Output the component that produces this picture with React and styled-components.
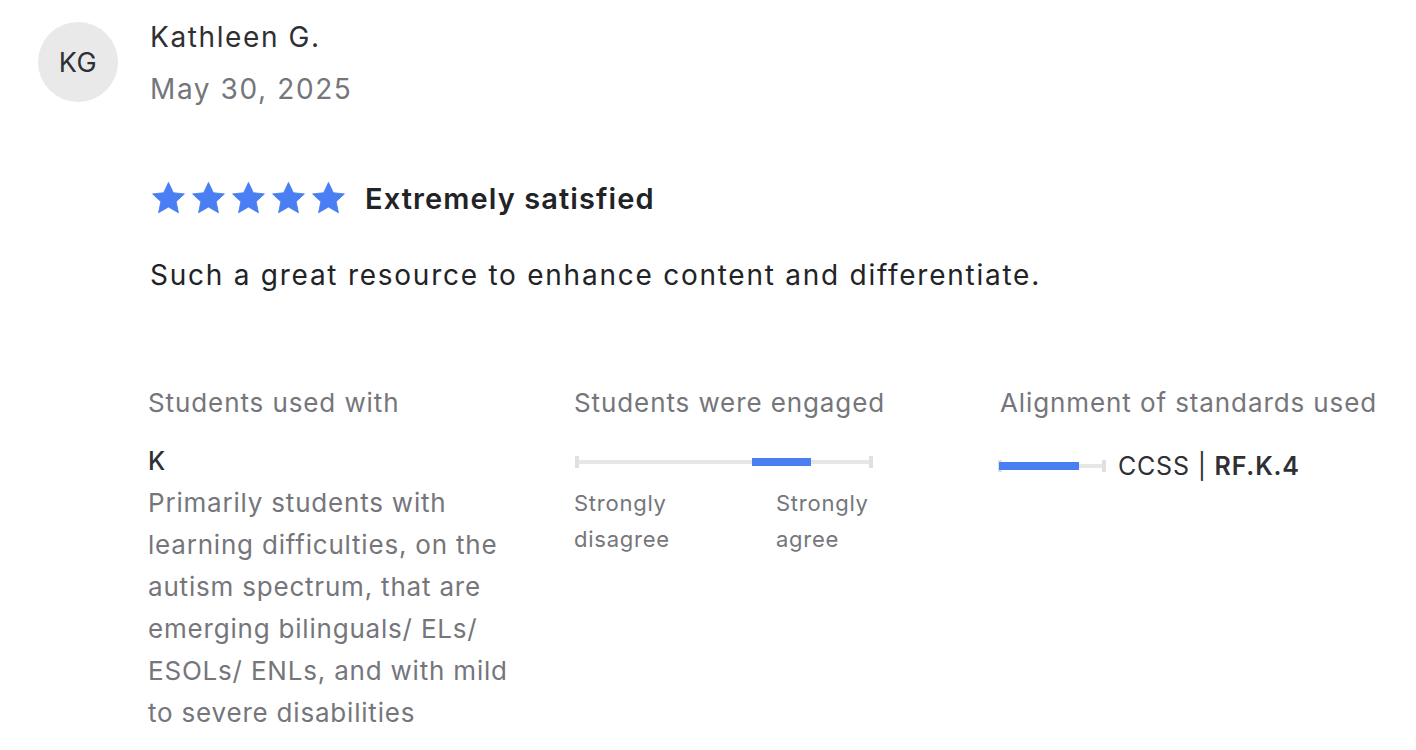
import styled, { createGlobalStyle } from "styled-components";

const GlobalStyle = createGlobalStyle`
  body {
    margin: 0;
    background: #fff;
    font-family: Inter, "Noto Sans", sans-serif;
    color: #222326;
  }
`;

const Review = styled.div`
  display: flex;
  gap: 32px;
  padding: 20px 38px;
`;

const Avatar = styled.div`
  flex: none;
  width: 80px;
  height: 80px;
  margin-top: 2px;
  border-radius: 50%;
  background: #e9e9ea;
  display: flex;
  align-items: center;
  justify-content: center;
  font-size: 27px;
  letter-spacing: 0.5px;
  color: #2f3034;
`;

const Body = styled.div`
  flex: 1;
  display: flex;
  flex-direction: column;
`;

const Name = styled.div`
  font-size: 28px;
  line-height: 34px;
  letter-spacing: 1.6px;
  color: #2f3034;
`;

const Date = styled.div`
  margin-top: 18px;
  font-size: 28px;
  line-height: 34px;
  letter-spacing: 1.6px;
  color: #75767b;
`;

const RatingRow = styled.div`
  display: flex;
  align-items: center;
  gap: 18px;
  margin-top: 74px;
`;

const Stars = styled.div`
  display: flex;
  gap: 3px;
`;

const RatingText = styled.div`
  font-size: 29px;
  font-weight: 600;
  letter-spacing: 1.1px;
  color: #222326;
`;

const Comment = styled.p`
  margin: 41px 0 0;
  font-size: 28px;
  line-height: 36px;
  letter-spacing: 1.75px;
  color: #222326;
`;

const Details = styled.div`
  display: grid;
  grid-template-columns: repeat(3, 426px);
  margin-top: 93px;
  margin-left: -2px;
`;

const Label = styled.div`
  font-size: 26px;
  line-height: 34px;
  letter-spacing: 0.9px;
  color: #75767b;
  white-space: nowrap;
`;

const Grade = styled.div`
  margin-top: 26px;
  font-size: 25px;
  line-height: 30px;
  font-weight: 500;
  color: #2f3034;
`;

const Note = styled.div`
  width: 372px;
  margin-top: 6px;
  font-size: 26px;
  line-height: 42px;
  letter-spacing: 0.8px;
  color: #75767b;
`;

const Scale = styled.div`
  position: relative;
  width: 298px;
  height: 14px;
  margin-top: 35px;
  margin-left: 1px;
`;

const Track = styled.div`
  position: absolute;
  left: 0;
  right: 0;
  top: 5px;
  height: 4px;
  background: #e6e6e6;
`;

const Cap = styled.div`
  position: absolute;
  top: 1px;
  ${(p) => (p.$side === "left" ? "left: 0;" : "right: 0;")}
  width: 4px;
  height: 12px;
  background: #e0e0e0;
`;

const Fill = styled.div`
  position: absolute;
  top: 3px;
  height: 8px;
  background: #4a7ef3;
`;

const ScaleLabels = styled.div`
  display: flex;
  margin-top: 16px;
`;

const ScaleLabel = styled.div`
  width: 202px;
  font-size: 22px;
  line-height: 36px;
  letter-spacing: 0.75px;
  color: #75767b;
`;

const StandardRow = styled.div`
  display: flex;
  align-items: center;
  gap: 12px;
  margin-top: 31px;
`;

const StandardText = styled.div`
  font-size: 25px;
  letter-spacing: 0.8px;
  color: #2f3034;
  b {
    font-weight: 600;
  }
`;

function Star() {
  return (
    <svg width="37" height="36" viewBox="0 0 24 24">
      <path
        fill="#4a7ef3"
        d="M12 1.6l3.2 6.9 7.4.8-5.5 5.1 1.5 7.4L12 18l-6.6 3.8 1.5-7.4L1.4 9.3l7.4-.8z"
        stroke="#4a7ef3"
        strokeWidth="0.6"
        strokeLinejoin="round"
      />
    </svg>
  );
}

export default function App() {
  return (
    <>
      <GlobalStyle />
      <Review>
        <Avatar>KG</Avatar>
        <Body>
          <Name>Kathleen G.</Name>
          <Date>May 30, 2025</Date>
          <RatingRow>
            <Stars>
              {[0, 1, 2, 3, 4].map((i) => (
                <Star key={i} />
              ))}
            </Stars>
            <RatingText>Extremely satisfied</RatingText>
          </RatingRow>
          <Comment>Such a great resource to enhance content and differentiate.</Comment>
          <Details>
            <div>
              <Label>Students used with</Label>
              <Grade>K</Grade>
              <Note>
                Primarily students with learning difficulties, on the autism spectrum, that are
                emerging bilinguals/ ELs/ ESOLs/ ENLs, and with mild to severe disabilities
              </Note>
            </div>
            <div>
              <Label>Students were engaged</Label>
              <Scale>
                <Track />
                <Cap $side="left" />
                <Cap $side="right" />
                <Fill style={{ left: "177px", width: "59px" }} />
              </Scale>
              <ScaleLabels>
                <ScaleLabel>
                  Strongly
                  <br />
                  disagree
                </ScaleLabel>
                <ScaleLabel>
                  Strongly
                  <br />
                  agree
                </ScaleLabel>
              </ScaleLabels>
            </div>
            <div>
              <Label>Alignment of standards used</Label>
              <StandardRow>
                <Scale style={{ width: "108px", marginTop: 0, marginLeft: "-2px" }}>
                  <Track />
                  <Cap $side="left" />
                  <Cap $side="right" />
                  <Fill style={{ left: "1px", width: "80px" }} />
                </Scale>
                <StandardText>
                  CCSS | <b>RF.K.4</b>
                </StandardText>
              </StandardRow>
            </div>
          </Details>
        </Body>
      </Review>
    </>
  );
}
